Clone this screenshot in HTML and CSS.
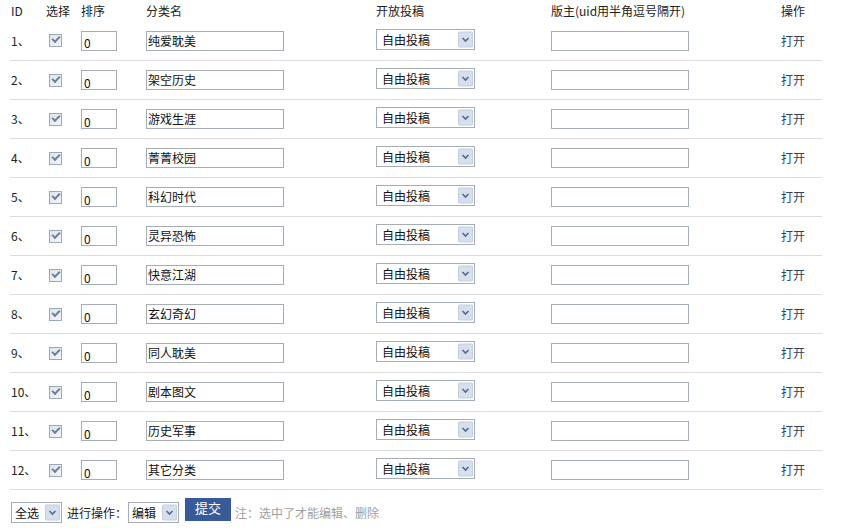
FILE: index.html
```html
<!DOCTYPE html>
<html lang="zh-CN">
<head>
  <meta charset="UTF-8">
  <title>分类管理</title>
  <link rel="stylesheet" href="styles.css">
</head>
<body>
  <form class="cate-form">
    <table class="cate-table">
      <colgroup>
        <col class="c-id"><col class="c-chk"><col class="c-sort"><col class="c-name">
        <col class="c-open"><col class="c-mod"><col class="c-op">
      </colgroup>
      <thead>
        <tr>
          <th>ID</th><th>选择</th><th>排序</th><th>分类名</th>
          <th>开放投稿</th><th>版主(uid用半角逗号隔开)</th><th>操作</th>
        </tr>
      </thead>
      <tbody id="rows"></tbody>
    </table>

    <div class="actions">
      <span class="sel sel-sm">
        <select><option>全选</option></select>
        <svg class="arrow" viewBox="0 0 15 16"><rect x="0.5" y="0.5" width="14" height="15" rx="1"/><path d="M4.5 6.5 L7.5 9.5 L10.5 6.5"/></svg>
      </span>
      <span class="label">进行操作：</span>
      <span class="sel sel-sm">
        <select><option>编辑</option></select>
        <svg class="arrow" viewBox="0 0 15 16"><rect x="0.5" y="0.5" width="14" height="15" rx="1"/><path d="M4.5 6.5 L7.5 9.5 L10.5 6.5"/></svg>
      </span>
      <button type="button" class="submit">提交</button>
      <span class="note">注：选中了才能编辑、删除</span>
    </div>
  </form>

  <script>
    const cates = ["纯爱耽美", "架空历史", "游戏生涯", "菁菁校园", "科幻时代", "灵异恐怖",
                   "快意江湖", "玄幻奇幻", "同人耽美", "剧本图文", "历史军事", "其它分类"];
    const tbody = document.querySelector("#rows");

    cates.forEach((name, i) => {
      const tr = document.createElement("tr");
      tr.innerHTML = `
        <td>${i + 1}、</td>
        <td><input type="checkbox" class="chk" checked></td>
        <td><input type="text" class="txt txt-sort" value="0"></td>
        <td><input type="text" class="txt txt-name" value="${name}"></td>
        <td>
          <span class="sel sel-open">
            <select><option>自由投稿</option></select>
            <svg class="arrow" viewBox="0 0 15 16"><rect x="0.5" y="0.5" width="14" height="15" rx="1"/><path d="M4.5 6.5 L7.5 9.5 L10.5 6.5"/></svg>
          </span>
        </td>
        <td><input type="text" class="txt txt-mod" value=""></td>
        <td><a class="op" href="#">打开</a></td>`;
      tbody.appendChild(tr);
    });
  </script>
</body>
</html>
```

FILE: styles.css
```css
* {
  box-sizing: border-box;
}

body {
  margin: 0;
  background: #ffffff;
  color: #222222;
  font: 12px "Noto Sans CJK SC", "Liberation Sans", sans-serif;
}

input, select, button {
  font: 12px "Noto Sans CJK SC", "Liberation Sans", sans-serif;
  color: #111111;
}

.cate-table {
  margin-left: 10px;
  width: 812px;
  table-layout: fixed;
  border-collapse: collapse;
}

.c-id { width: 35px; }
.c-chk { width: 35px; }
.c-sort { width: 65px; }
.c-name { width: 230px; }
.c-open { width: 175px; }
.c-mod { width: 230px; }
.c-op { width: 42px; }

.cate-table th {
  height: 21px;
  padding: 0 0 0 1px;
  text-align: left;
  font-weight: normal;
  vertical-align: top;
  line-height: 21px;
}

.cate-table td {
  height: 39px;
  padding: 0 0 0 1px;
  vertical-align: middle;
  border-bottom: 1px solid #dcdcdc;
}

.chk {
  appearance: none;
  position: relative;
  display: block;
  width: 13px;
  height: 13px;
  margin: 1px 0 0 3px;
  border: 1px solid #98a9bb;
  background: linear-gradient(135deg, #dfe5ec, #f3f5f8);
}

.chk:checked::after {
  content: "";
  position: absolute;
  left: 2px;
  top: 1px;
  width: 6px;
  height: 3px;
  border-left: 2px solid #6a7f98;
  border-bottom: 2px solid #6a7f98;
  transform: rotate(-45deg);
}

.txt {
  display: block;
  height: 20px;
  margin-top: 1px;
  padding: 4px 2px 0;
  border: 1px solid #a6adb6;
  background: #ffffff;
  outline: none;
}

.txt-sort { width: 36px; }
.txt-name { width: 138px; padding: 0 1px 1px; line-height: 17px; }
.txt-mod { width: 138px; }

.sel {
  position: relative;
  display: inline-block;
  vertical-align: middle;
}

.sel select {
  appearance: none;
  display: block;
  height: 21px;
  padding: 0 0 0 5px;
  border: 1px solid #a5adb7;
  border-radius: 0;
  background: #ffffff;
  outline: none;
}

.sel-open {
  margin-top: -3px;
}

.sel-open select {
  width: 99px;
}

.sel .arrow {
  position: absolute;
  right: 2px;
  top: 2px;
  width: 15px;
  height: 17px;
  pointer-events: none;
}

.sel .arrow rect {
  fill: #d5dfed;
  stroke: #c3cfe0;
}

.sel .arrow path {
  fill: none;
  stroke: #57698a;
  stroke-width: 1.6;
}

.op {
  color: #33425b;
  text-decoration: none;
}

.actions {
  display: flex;
  align-items: flex-start;
  margin: 12px 0 0 11px;
  line-height: 21px;
}

.sel-sm select {
  width: 51px;
  padding-left: 3px;
}

.label {
  margin: 0 1px 0 5px;
}

.submit {
  height: 23px;
  width: 46px;
  margin: -4px 0 0 6px;
  padding: 0 0 5px;
  border: none;
  background: #375a98;
  color: #ffffff;
  font-size: 13px;
}

.note {
  margin-left: 4px;
  color: #a0a0a0;
}
```
